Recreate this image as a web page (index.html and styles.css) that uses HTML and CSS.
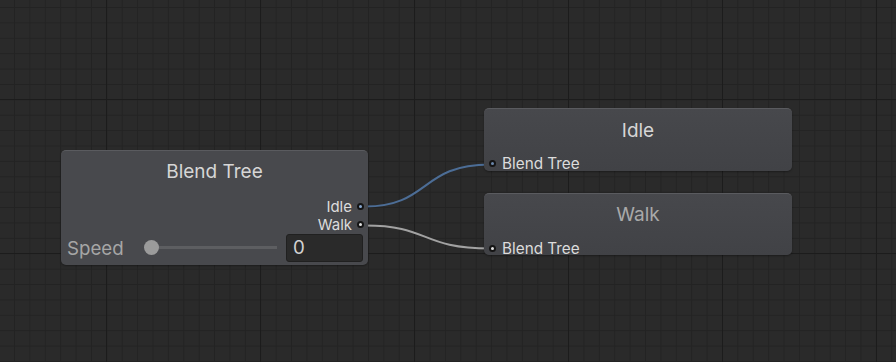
FILE: index.html
```html
<!DOCTYPE html>
<html lang="en">
<head>
    <meta charset="UTF-8">
    <title>Animator Graph</title>
    <link rel="stylesheet" href="styles.css">
</head>
<body>

<div class="canvas">
    <!-- Wires between nodes -->
    <svg class="wires" width="896" height="362" viewBox="0 0 896 362">
        <path class="wire wire-idle" d="M365 206.5 C 430 206.5, 420 164.5, 490 164.5"/>
        <path class="wire wire-walk" d="M365 225.5 C 430 225.5, 420 248.5, 490 248.5"/>
    </svg>

    <!-- Blend Tree node -->
    <div class="node node-blend">
        <div class="node-title">Blend Tree</div>
        <div class="outputs">
            <div class="port-row out">
                <span class="port-label">Idle</span>
                <span class="port port-blue"></span>
            </div>
            <div class="port-row out">
                <span class="port-label">Walk</span>
                <span class="port port-grey"></span>
            </div>
        </div>
        <div class="param-row">
            <span class="param-label">Speed</span>
            <div class="slider">
                <span class="slider-track"></span>
                <span class="slider-knob"></span>
            </div>
            <div class="num-field">0</div>
        </div>
    </div>

    <!-- Motion nodes -->
    <div class="node node-motion node-idle">
        <div class="node-title">Idle</div>
        <div class="port-row in">
            <span class="port port-blue-dim"></span>
            <span class="port-label">Blend Tree</span>
        </div>
    </div>

    <div class="node node-motion node-walk">
        <div class="node-title dim">Walk</div>
        <div class="port-row in">
            <span class="port port-grey"></span>
            <span class="port-label">Blend Tree</span>
        </div>
    </div>
</div>

</body>
</html>
```

FILE: styles.css
```css
html, body {
    margin: 0;
    padding: 0;
}
body {
    font-family: Inter, "Noto Sans", sans-serif;
    background-color: #282828;
}
.canvas {
    position: relative;
    width: 896px;
    height: 362px;
    overflow: hidden;
    background-color: #2a2a2a;
    /* grid: major lines every 154px, minor every 15.4px */
    background-image:
        linear-gradient(to right, #1c1c1c 1px, transparent 1px),
        linear-gradient(to bottom, #1c1c1c 1px, transparent 1px),
        linear-gradient(to right, #232323 1px, transparent 1px),
        linear-gradient(to bottom, #232323 1px, transparent 1px);
    background-size: 154px 154px, 154px 154px, 15.4px 15.4px, 15.4px 15.4px;
    background-position: 106px 99px, 106px 99px, 14px 7px, 14px 7px;
}
.wires {
    position: absolute;
    left: 0;
    top: 0;
}
.wire {
    fill: none;
    stroke-width: 2;
}
.wire-idle {
    stroke: #4c6d96;
}
.wire-walk {
    stroke: #a2a2a2;
}

/* Nodes */
.node {
    position: absolute;
    box-sizing: border-box;
    display: flex;
    flex-direction: column;
    border-radius: 5px;
    background: linear-gradient(#47484c, #414246);
    border-top: 1px solid #5a5b5f;
    box-shadow: 0 1px 2px rgba(0, 0, 0, 0.35);
    color: #d4d4d4;
}
.node > * {
    flex-shrink: 0;
}
.node-title {
    font-size: 19px;
    line-height: 20px;
    text-align: center;
    color: #d6d6d6;
}
.node-title.dim {
    color: #a9a9a9;
}

.node-blend {
    left: 61px;
    top: 150px;
    width: 307px;
    height: 115px;
    background: #48494d;
}
.node-blend .node-title {
    padding-top: 11px;
    height: 31px;
}
.outputs {
    margin-top: 4px;
}

.port-row {
    display: flex;
    align-items: center;
    height: 18px;
    font-size: 15px;
    color: #dcdcdc;
}
.port-row.out {
    justify-content: flex-end;
    padding-right: 4px;
    gap: 5px;
}
.port-row.in {
    padding-left: 5px;
    gap: 6px;
}
.port {
    box-sizing: border-box;
    width: 7px;
    height: 7px;
    border-radius: 50%;
    border: 2px solid #141414;
}
.port-blue {
    background: #88a8d0;
}
.port-blue-dim {
    background: #6a86aa;
}
.port-grey {
    background: #e0e0e0;
}

.param-row {
    display: flex;
    align-items: center;
    margin-top: 1px;
    height: 28px;
    padding: 0 5px 0 6px;
}
.param-label {
    width: 72px;
    font-size: 18.7px;
    color: #a6a6a6;
}
.slider {
    position: relative;
    width: 140px;
    height: 16px;
}
.slider-track {
    position: absolute;
    left: 12px;
    right: 2px;
    top: 6px;
    height: 3px;
    background: #5d5e61;
}
.slider-knob {
    position: absolute;
    left: 5px;
    top: 0;
    width: 15px;
    height: 15px;
    border-radius: 50%;
    background: #9b9b9b;
}
.num-field {
    box-sizing: border-box;
    margin-left: auto;
    width: 77px;
    height: 28px;
    padding-left: 6px;
    border: 1px solid #202020;
    border-radius: 3px;
    background: #2a2a2a;
    font-size: 18.7px;
    line-height: 26px;
    color: #d2d2d2;
}

.node-motion {
    left: 484px;
    width: 308px;
}
.node-motion .node-title {
    padding-top: 12px;
    height: 20px;
}
.node-motion .port-row {
    margin-top: 14px;
    height: 16px;
    font-size: 15.3px;
}
.node-idle {
    top: 108px;
    height: 63px;
}
.node-walk {
    top: 193px;
    height: 62px;
}
.node-walk .node-title {
    padding-top: 11px;
}
.node-walk .port-row {
    margin-top: 15px;
}
```
